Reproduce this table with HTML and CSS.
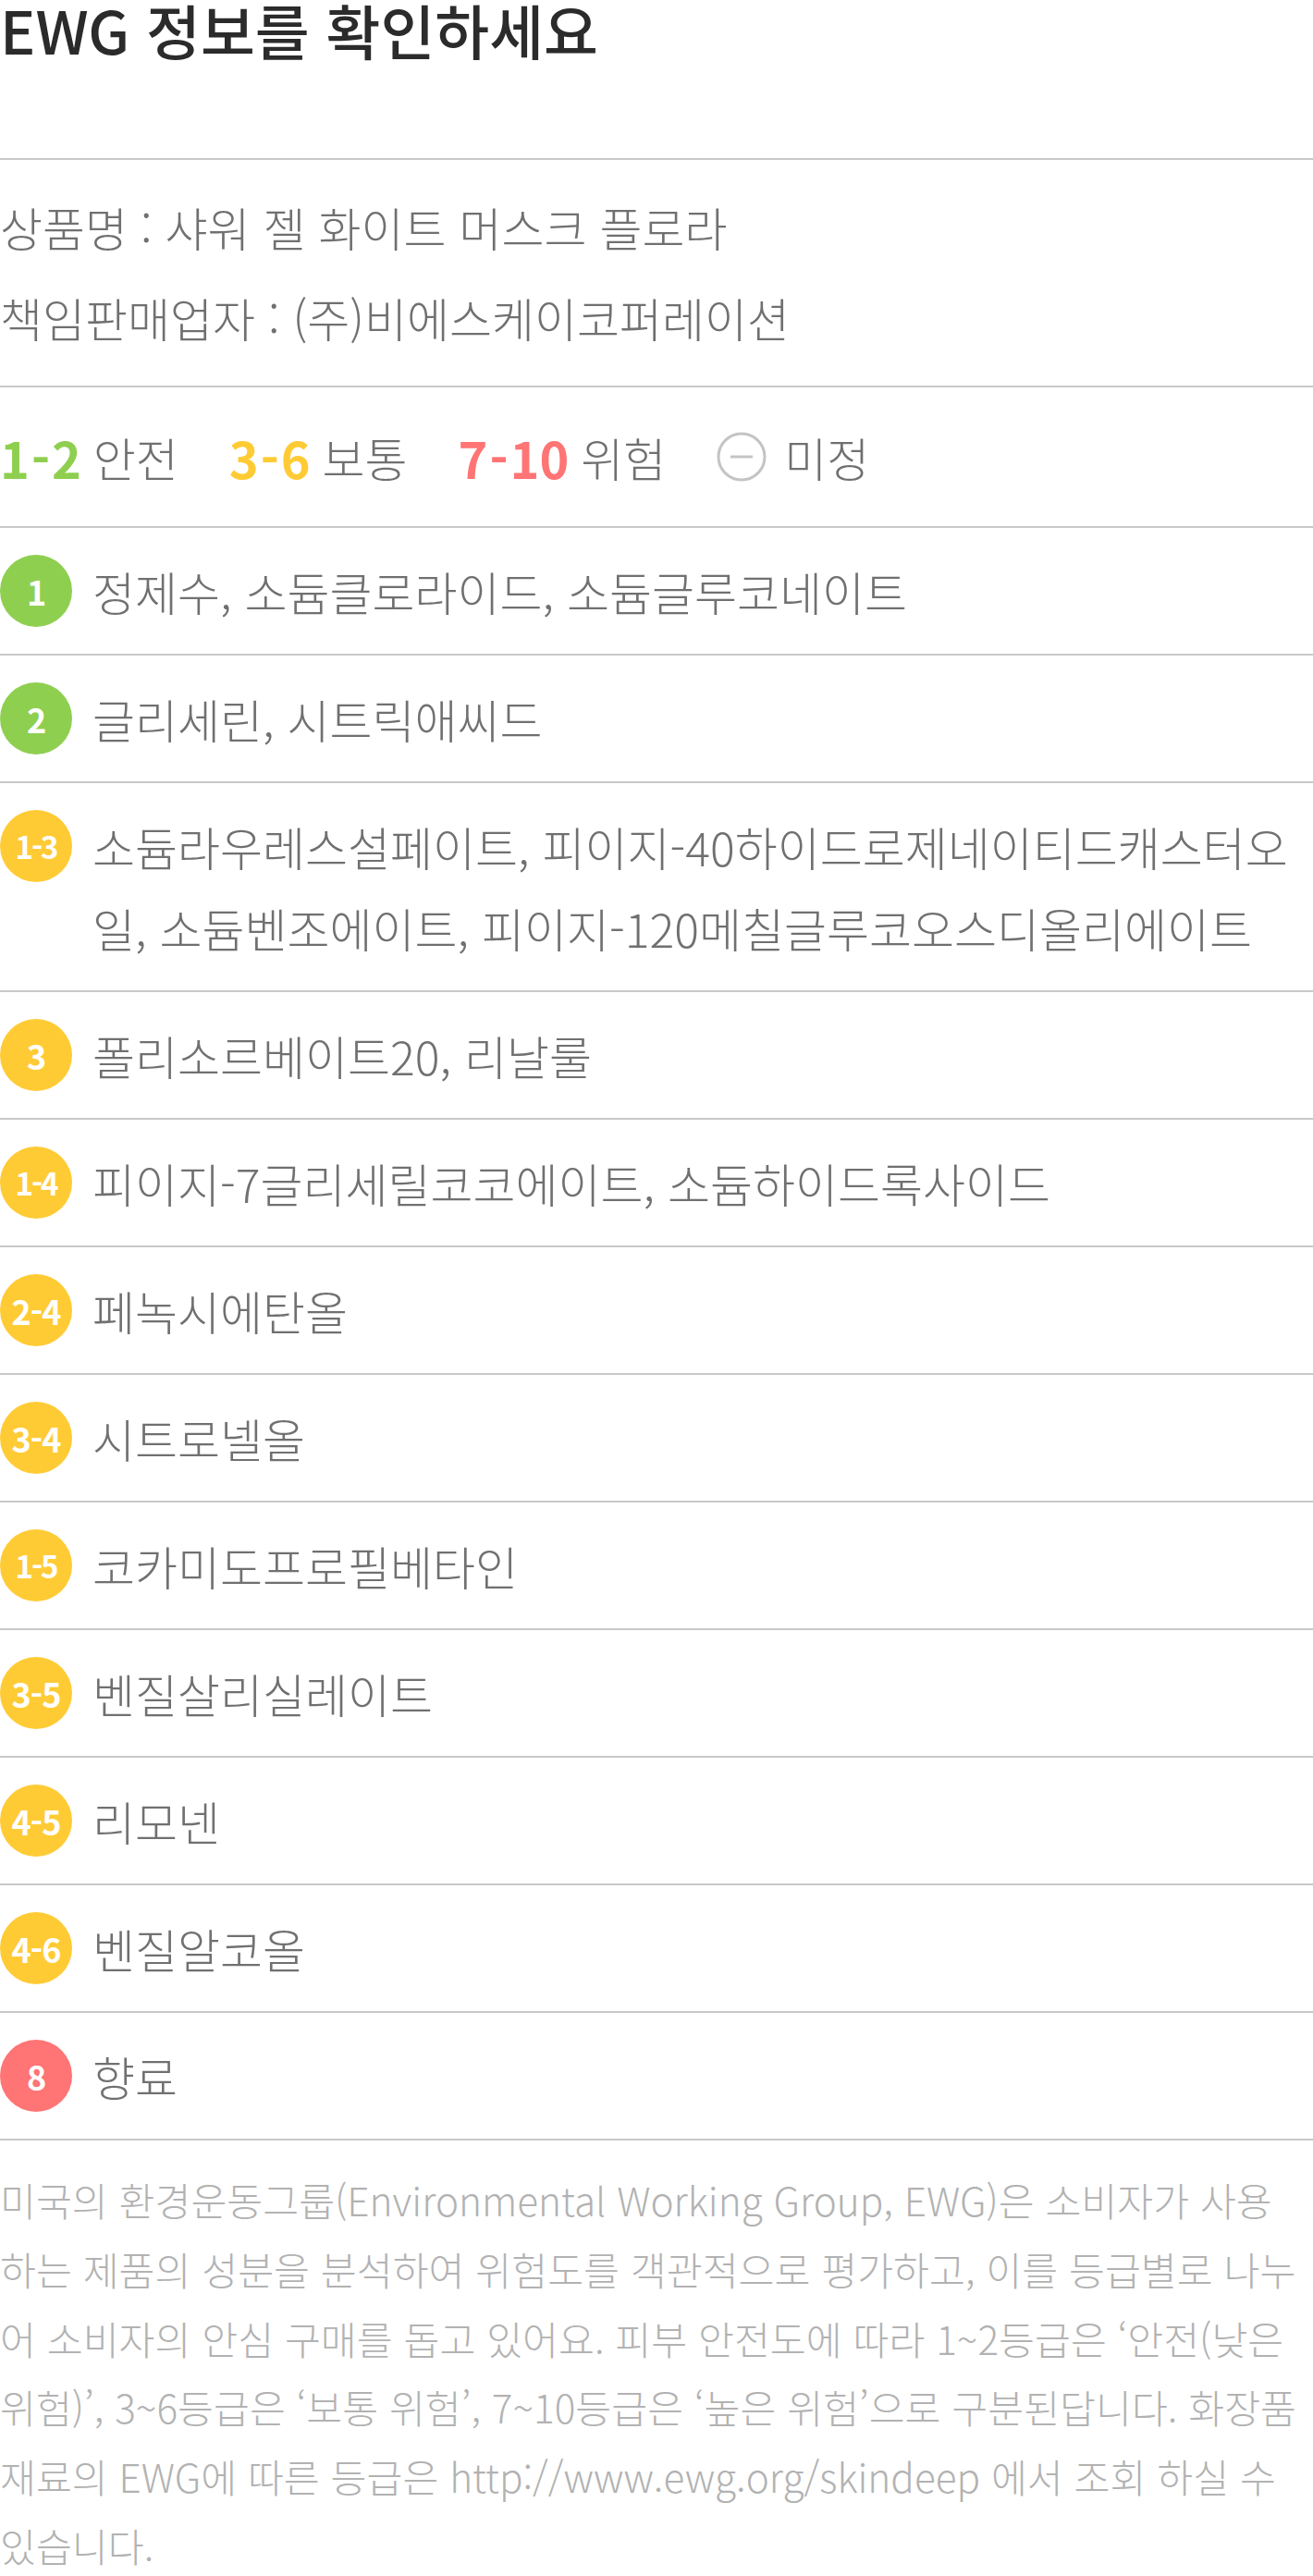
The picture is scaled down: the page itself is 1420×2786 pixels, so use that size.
FILE: index.html
```html
<!DOCTYPE html>
<html lang="ko">
<head>
    <meta charset="UTF-8">
    <meta name="viewport" content="width=device-width, initial-scale=1.0">
    <title>EWG 정보</title>
    <link rel="stylesheet" href="styles.css">
</head>
<body>
    <section class="ewg">
        <h1 class="ewg-title">EWG 정보를 확인하세요</h1>

        <div class="product-info">
            <p>상품명 : 샤워 젤 화이트 머스크 플로라</p>
            <p>책임판매업자 : (주)비에스케이코퍼레이션</p>
        </div>

        <div class="legend">
            <div class="legend-item"><span class="legend-num safe">1<i>-</i>2</span>안전</div>
            <div class="legend-item"><span class="legend-num normal">3<i>-</i>6</span>보통</div>
            <div class="legend-item"><span class="legend-num danger">7<i>-</i>10</span>위험</div>
            <div class="legend-item">
                <svg class="legend-icon" width="54" height="54" viewBox="0 0 54 54">
                    <circle cx="27" cy="27" r="25" fill="none" stroke="#c4c4c4" stroke-width="3"/>
                    <line x1="15" y1="27" x2="39" y2="27" stroke="#c4c4c4" stroke-width="3"/>
                </svg>
                미정
            </div>
        </div>

        <ul class="ingredients">
            <li class="ingredient"><span class="grade safe">1</span><span class="names">정제수, 소듐클로라이드, 소듐글루코네이트</span></li>
            <li class="ingredient"><span class="grade safe">2</span><span class="names">글리세린, 시트릭애씨드</span></li>
            <li class="ingredient"><span class="grade normal small">1-3</span><span class="names">소듐라우레스설페이트, 피이지-40하이드로제네이티드캐스터오일, 소듐벤조에이트, 피이지-120메칠글루코오스디올리에이트</span></li>
            <li class="ingredient"><span class="grade normal">3</span><span class="names">폴리소르베이트20, 리날룰</span></li>
            <li class="ingredient"><span class="grade normal small">1-4</span><span class="names">피이지-7글리세릴코코에이트, 소듐하이드록사이드</span></li>
            <li class="ingredient"><span class="grade normal">2-4</span><span class="names">페녹시에탄올</span></li>
            <li class="ingredient"><span class="grade normal">3-4</span><span class="names">시트로넬올</span></li>
            <li class="ingredient"><span class="grade normal small">1-5</span><span class="names">코카미도프로필베타인</span></li>
            <li class="ingredient"><span class="grade normal">3-5</span><span class="names">벤질살리실레이트</span></li>
            <li class="ingredient"><span class="grade normal">4-5</span><span class="names">리모넨</span></li>
            <li class="ingredient"><span class="grade normal">4-6</span><span class="names">벤질알코올</span></li>
            <li class="ingredient"><span class="grade danger">8</span><span class="names">향료</span></li>
        </ul>

        <p class="note">미국의 환경운동그룹(Environmental Working Group, EWG)은 소비자가 사용하는 제품의 성분을 분석하여 위험도를 객관적으로 평가하고, 이를 등급별로 나누어 소비자의 안심 구매를 돕고 있어요. 피부 안전도에 따라 1~2등급은 ‘안전(낮은 위험)’, 3~6등급은 ‘보통 위험’, 7~10등급은 ‘높은 위험’으로 구분된답니다. 화장품 재료의 EWG에 따른 등급은 http://www.ewg.org/skindeep 에서 조회 하실 수 있습니다.</p>
    </section>
</body>
</html>
```

FILE: styles.css
```css
body {
    margin: 0;
    font-family: "Noto Sans CJK KR", "Noto Sans", sans-serif;
    background: #fff;
    color: #707070;
}
.ewg {
    width: 1420px;
}
.ewg-title {
    margin: 0;
    font-size: 64px;
    font-weight: 500;
    line-height: 62px;
    color: #2b2b2b;
    padding-bottom: 109px;
}
.product-info {
    border-top: 2px solid #c8c8c8;
    padding: 28px 0 30px;
    display: flex;
    flex-direction: column;
    gap: 10px;
}
.product-info p {
    margin: 0;
    font-size: 50px;
    font-weight: 300;
    line-height: 88px;
}
.legend {
    border-top: 2px solid #c8c8c8;
    padding: 31px 0;
    height: 88px;
    display: flex;
    align-items: center;
    gap: 55px;
    font-size: 50px;
    font-weight: 300;
}
.legend-item {
    display: flex;
    align-items: center;
    gap: 13px;
}
.legend-num {
    font-size: 54px;
    font-weight: 700;
}
.legend-num i {
    font-style: normal;
    margin: 0 2px;
}
.legend-icon {
    margin-right: 6px;
}
.safe {
    color: #8fcf50;
}
.normal {
    color: #ffcb35;
}
.danger {
    color: #ff7474;
}
.ingredients {
    list-style: none;
    margin: 0;
    padding: 0;
}
.ingredient {
    border-top: 2px solid #c8c8c8;
    padding: 24px 0;
    display: flex;
    align-items: flex-start;
    gap: 22px;
}
.grade {
    flex: none;
    width: 78px;
    height: 78px;
    margin-top: 5px;
    border-radius: 50%;
    display: flex;
    align-items: center;
    justify-content: center;
    color: #fff;
    font-size: 36px;
    font-weight: 600;
    letter-spacing: -1px;
}
.grade.safe {
    background: #8fcf50;
}
.grade.normal {
    background: #ffcb35;
}
.grade.danger {
    background: #ff7474;
}
.grade.small {
    font-size: 33px;
    letter-spacing: -2px;
}
.names {
    font-size: 50px;
    font-weight: 300;
    line-height: 88px;
}
.note {
    margin: 0;
    border-top: 2px solid #c8c8c8;
    padding: 27px 10px 0 0;
    font-size: 42.3px;
    font-weight: 300;
    line-height: 74.8px;
    color: #b2b2b2;
}
```
